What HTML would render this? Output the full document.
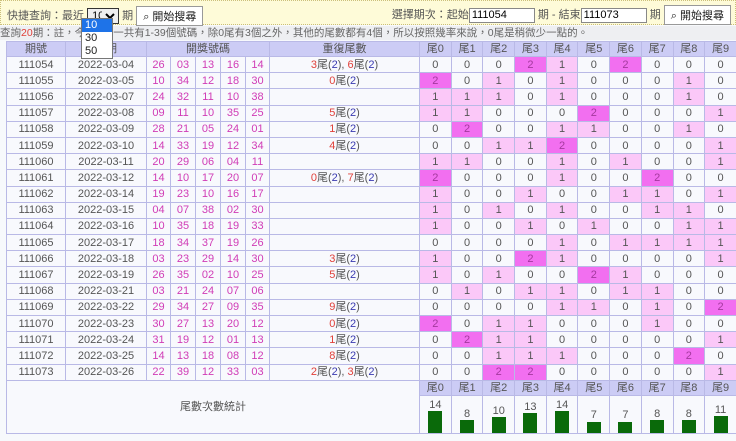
<!DOCTYPE html><html><head><meta charset="utf-8"><style>
body{margin:0;width:736px;height:441px;background:#f7f9fc;font-family:"Liberation Sans","Noto Sans CJK TC",sans-serif;font-size:11px;color:#555;overflow:hidden}
.bar{position:absolute;left:0;top:0;width:734px;height:23px;background:#fefbd8;border:1px dotted #cbbf7a;}
.bar .bl{position:absolute;left:6px;top:5px}
.bar .br{position:absolute;right:4px;top:4px}
select{font-size:11px;height:16px;width:32px;padding:0;border:1px solid #333;vertical-align:middle}
.btn{display:inline-block;border:1px solid #999;background:#fff;padding:1px 6px;color:#222;font-size:11px;vertical-align:middle}
input{width:60px;height:13px;font-size:11px;border:1px solid #888;padding:0 2px;vertical-align:middle}
.dd{position:absolute;left:81px;top:18px;width:30px;background:#fff;border:1px solid #777;font-size:11px;color:#222;z-index:5}
.dd div{height:13px;line-height:13px;padding-left:3px}
.note{position:absolute;left:0;top:26px;width:736px;height:14px;background:#eeeff2;line-height:14px;font-size:10.5px;color:#666}
table{position:absolute;left:6px;top:41px;width:730px;border-collapse:collapse;table-layout:fixed}
td{border:1px solid #b9b9e6;text-align:center;height:15.2px;padding:0;line-height:14px;background:#f8f9fd}
tr.h td{background:#ccccf5;height:13px}
.n{color:#d03cb6}
.a{background:#fbc8f8}
.b{background:#f26ff0;color:#a4389e}
.r{color:#e0413a}
.u{color:#3a3ab0}
.bb{display:inline-block;width:14px;background:#0a6a0a;vertical-align:bottom}
</style></head><body>
<div class="bar"><div class="bl">快捷查詢：最近 <select><option>10</option></select> 期 <span class="btn">⌕ 開始搜尋</span></div>
<div class="br">選擇期次：起始<input value="111054"> 期 - 結束<input value="111073"> 期 <span class="btn">⌕ 開始搜尋</span></div></div>
<div class="dd"><div style="background:#1e73e8;color:#fff">10</div><div>30</div><div>50</div></div>
<div class="note">查詢<span style="color:#e0413a">20</span>期：註，今彩539一共有1-39個號碼，除0尾有3個之外，其他的尾數都有4個，所以按照幾率來說，0尾是稍微少一點的。</div>
<table>
<colgroup><col style="width:59px"><col style="width:81px"><col style="width:24px"><col style="width:25px"><col style="width:25px"><col style="width:25px"><col style="width:24px"><col style="width:150px"><col span="10" style="width:31.7px"></colgroup>
<tr class="h"><td>期號</td><td>日期</td><td colspan="5">開獎號碼</td><td>重復尾數</td><td>尾0</td><td>尾1</td><td>尾2</td><td>尾3</td><td>尾4</td><td>尾5</td><td>尾6</td><td>尾7</td><td>尾8</td><td>尾9</td></tr>
<tr><td>111054</td><td>2022-03-04</td><td class="n">26</td><td class="n">03</td><td class="n">13</td><td class="n">16</td><td class="n">14</td><td><span class="r">3</span>尾(<span class="u">2</span>), <span class="r">6</span>尾(<span class="u">2</span>)</td><td>0</td><td>0</td><td>0</td><td class="b">2</td><td class="a">1</td><td>0</td><td class="b">2</td><td>0</td><td>0</td><td>0</td></tr>
<tr><td>111055</td><td>2022-03-05</td><td class="n">10</td><td class="n">34</td><td class="n">12</td><td class="n">18</td><td class="n">30</td><td><span class="r">0</span>尾(<span class="u">2</span>)</td><td class="b">2</td><td>0</td><td class="a">1</td><td>0</td><td class="a">1</td><td>0</td><td>0</td><td>0</td><td class="a">1</td><td>0</td></tr>
<tr><td>111056</td><td>2022-03-07</td><td class="n">24</td><td class="n">32</td><td class="n">11</td><td class="n">10</td><td class="n">38</td><td></td><td class="a">1</td><td class="a">1</td><td class="a">1</td><td>0</td><td class="a">1</td><td>0</td><td>0</td><td>0</td><td class="a">1</td><td>0</td></tr>
<tr><td>111057</td><td>2022-03-08</td><td class="n">09</td><td class="n">11</td><td class="n">10</td><td class="n">35</td><td class="n">25</td><td><span class="r">5</span>尾(<span class="u">2</span>)</td><td class="a">1</td><td class="a">1</td><td>0</td><td>0</td><td>0</td><td class="b">2</td><td>0</td><td>0</td><td>0</td><td class="a">1</td></tr>
<tr><td>111058</td><td>2022-03-09</td><td class="n">28</td><td class="n">21</td><td class="n">05</td><td class="n">24</td><td class="n">01</td><td><span class="r">1</span>尾(<span class="u">2</span>)</td><td>0</td><td class="b">2</td><td>0</td><td>0</td><td class="a">1</td><td class="a">1</td><td>0</td><td>0</td><td class="a">1</td><td>0</td></tr>
<tr><td>111059</td><td>2022-03-10</td><td class="n">14</td><td class="n">33</td><td class="n">19</td><td class="n">12</td><td class="n">34</td><td><span class="r">4</span>尾(<span class="u">2</span>)</td><td>0</td><td>0</td><td class="a">1</td><td class="a">1</td><td class="b">2</td><td>0</td><td>0</td><td>0</td><td>0</td><td class="a">1</td></tr>
<tr><td>111060</td><td>2022-03-11</td><td class="n">20</td><td class="n">29</td><td class="n">06</td><td class="n">04</td><td class="n">11</td><td></td><td class="a">1</td><td class="a">1</td><td>0</td><td>0</td><td class="a">1</td><td>0</td><td class="a">1</td><td>0</td><td>0</td><td class="a">1</td></tr>
<tr><td>111061</td><td>2022-03-12</td><td class="n">14</td><td class="n">10</td><td class="n">17</td><td class="n">20</td><td class="n">07</td><td><span class="r">0</span>尾(<span class="u">2</span>), <span class="r">7</span>尾(<span class="u">2</span>)</td><td class="b">2</td><td>0</td><td>0</td><td>0</td><td class="a">1</td><td>0</td><td>0</td><td class="b">2</td><td>0</td><td>0</td></tr>
<tr><td>111062</td><td>2022-03-14</td><td class="n">19</td><td class="n">23</td><td class="n">10</td><td class="n">16</td><td class="n">17</td><td></td><td class="a">1</td><td>0</td><td>0</td><td class="a">1</td><td>0</td><td>0</td><td class="a">1</td><td class="a">1</td><td>0</td><td class="a">1</td></tr>
<tr><td>111063</td><td>2022-03-15</td><td class="n">04</td><td class="n">07</td><td class="n">38</td><td class="n">02</td><td class="n">30</td><td></td><td class="a">1</td><td>0</td><td class="a">1</td><td>0</td><td class="a">1</td><td>0</td><td>0</td><td class="a">1</td><td class="a">1</td><td>0</td></tr>
<tr><td>111064</td><td>2022-03-16</td><td class="n">10</td><td class="n">35</td><td class="n">18</td><td class="n">19</td><td class="n">33</td><td></td><td class="a">1</td><td>0</td><td>0</td><td class="a">1</td><td>0</td><td class="a">1</td><td>0</td><td>0</td><td class="a">1</td><td class="a">1</td></tr>
<tr><td>111065</td><td>2022-03-17</td><td class="n">18</td><td class="n">34</td><td class="n">37</td><td class="n">19</td><td class="n">26</td><td></td><td>0</td><td>0</td><td>0</td><td>0</td><td class="a">1</td><td>0</td><td class="a">1</td><td class="a">1</td><td class="a">1</td><td class="a">1</td></tr>
<tr><td>111066</td><td>2022-03-18</td><td class="n">03</td><td class="n">23</td><td class="n">29</td><td class="n">14</td><td class="n">30</td><td><span class="r">3</span>尾(<span class="u">2</span>)</td><td class="a">1</td><td>0</td><td>0</td><td class="b">2</td><td class="a">1</td><td>0</td><td>0</td><td>0</td><td>0</td><td class="a">1</td></tr>
<tr><td>111067</td><td>2022-03-19</td><td class="n">26</td><td class="n">35</td><td class="n">02</td><td class="n">10</td><td class="n">25</td><td><span class="r">5</span>尾(<span class="u">2</span>)</td><td class="a">1</td><td>0</td><td class="a">1</td><td>0</td><td>0</td><td class="b">2</td><td class="a">1</td><td>0</td><td>0</td><td>0</td></tr>
<tr><td>111068</td><td>2022-03-21</td><td class="n">03</td><td class="n">21</td><td class="n">24</td><td class="n">07</td><td class="n">06</td><td></td><td>0</td><td class="a">1</td><td>0</td><td class="a">1</td><td class="a">1</td><td>0</td><td class="a">1</td><td class="a">1</td><td>0</td><td>0</td></tr>
<tr><td>111069</td><td>2022-03-22</td><td class="n">29</td><td class="n">34</td><td class="n">27</td><td class="n">09</td><td class="n">35</td><td><span class="r">9</span>尾(<span class="u">2</span>)</td><td>0</td><td>0</td><td>0</td><td>0</td><td class="a">1</td><td class="a">1</td><td>0</td><td class="a">1</td><td>0</td><td class="b">2</td></tr>
<tr><td>111070</td><td>2022-03-23</td><td class="n">30</td><td class="n">27</td><td class="n">13</td><td class="n">20</td><td class="n">12</td><td><span class="r">0</span>尾(<span class="u">2</span>)</td><td class="b">2</td><td>0</td><td class="a">1</td><td class="a">1</td><td>0</td><td>0</td><td>0</td><td class="a">1</td><td>0</td><td>0</td></tr>
<tr><td>111071</td><td>2022-03-24</td><td class="n">31</td><td class="n">19</td><td class="n">12</td><td class="n">01</td><td class="n">13</td><td><span class="r">1</span>尾(<span class="u">2</span>)</td><td>0</td><td class="b">2</td><td class="a">1</td><td class="a">1</td><td>0</td><td>0</td><td>0</td><td>0</td><td>0</td><td class="a">1</td></tr>
<tr><td>111072</td><td>2022-03-25</td><td class="n">14</td><td class="n">13</td><td class="n">18</td><td class="n">08</td><td class="n">12</td><td><span class="r">8</span>尾(<span class="u">2</span>)</td><td>0</td><td>0</td><td class="a">1</td><td class="a">1</td><td class="a">1</td><td>0</td><td>0</td><td>0</td><td class="b">2</td><td>0</td></tr>
<tr><td>111073</td><td>2022-03-26</td><td class="n">22</td><td class="n">39</td><td class="n">12</td><td class="n">33</td><td class="n">03</td><td><span class="r">2</span>尾(<span class="u">2</span>), <span class="r">3</span>尾(<span class="u">2</span>)</td><td>0</td><td>0</td><td class="b">2</td><td class="b">2</td><td>0</td><td>0</td><td>0</td><td>0</td><td>0</td><td class="a">1</td></tr>
<tr class="h"><td colspan="8" rowspan="2" style="background:#f8f9fd">尾數次數統計</td><td>尾0</td><td>尾1</td><td>尾2</td><td>尾3</td><td>尾4</td><td>尾5</td><td>尾6</td><td>尾7</td><td>尾8</td><td>尾9</td></tr>
<tr style="height:38px"><td style="vertical-align:bottom;line-height:12px">14<br><span class="bb" style="height:22px"></span></td><td style="vertical-align:bottom;line-height:12px">8<br><span class="bb" style="height:13px"></span></td><td style="vertical-align:bottom;line-height:12px">10<br><span class="bb" style="height:16px"></span></td><td style="vertical-align:bottom;line-height:12px">13<br><span class="bb" style="height:20px"></span></td><td style="vertical-align:bottom;line-height:12px">14<br><span class="bb" style="height:22px"></span></td><td style="vertical-align:bottom;line-height:12px">7<br><span class="bb" style="height:11px"></span></td><td style="vertical-align:bottom;line-height:12px">7<br><span class="bb" style="height:11px"></span></td><td style="vertical-align:bottom;line-height:12px">8<br><span class="bb" style="height:13px"></span></td><td style="vertical-align:bottom;line-height:12px">8<br><span class="bb" style="height:13px"></span></td><td style="vertical-align:bottom;line-height:12px">11<br><span class="bb" style="height:17px"></span></td></tr>
</table>
</body></html>
